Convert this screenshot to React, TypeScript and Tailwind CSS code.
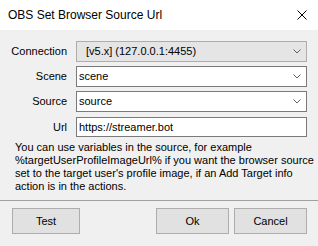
import React from 'react'

function Chevron() {
  return (
    <svg width="8" height="5" viewBox="0 0 8 5" className="shrink-0">
      <path d="M0.5 0.5 L4 4 L7.5 0.5" fill="none" stroke="#606060" strokeWidth="1" />
    </svg>
  )
}

function Row({ label, children, className = '' }: { label: string; children: React.ReactNode; className?: string }) {
  return (
    <div className={`flex items-center ${className}`}>
      <span className="w-[67px] text-right shrink-0">{label}</span>
      <div className="ml-[9px] w-[231px]">{children}</div>
    </div>
  )
}

export default function App() {
  return (
    <div className="w-[318px] h-[246px] bg-[#f0f0f0] flex flex-col text-black overflow-hidden" style={{ fontFamily: '"Liberation Sans", Arial, sans-serif' }}>
      {/* Title bar */}
      <div className="h-[30px] bg-white flex items-center justify-between pl-[8px] pr-[11px] shrink-0">
        <span className="text-[12px]">OBS Set Browser Source Url</span>
        <svg width="10" height="10" viewBox="0 0 10 10">
          <path d="M0.5 0.5 L9.5 9.5 M9.5 0.5 L0.5 9.5" stroke="#000" strokeWidth="1" />
        </svg>
      </div>

      {/* Fields */}
      <div className="flex flex-col text-[11px] pt-[11px]">
        <Row label="Connection">
          <div className="h-[21px] bg-[#e5e5e5] border border-[#adadad] flex items-center justify-between pl-[9px] pr-[5px]">
            <span>[v5.x] (127.0.0.1:4455)</span>
            <Chevron />
          </div>
        </Row>
        <Row label="Scene" className="mt-[4px]">
          <div className="h-[21px] bg-white border border-[#7a7a7a] flex items-center justify-between pl-[2px] pr-[5px]">
            <span>scene</span>
            <Chevron />
          </div>
        </Row>
        <Row label="Source" className="mt-[4px]">
          <div className="h-[21px] bg-white border border-[#7a7a7a] flex items-center justify-between pl-[2px] pr-[5px]">
            <span>source</span>
            <Chevron />
          </div>
        </Row>
        <Row label="Url" className="mt-[5px]">
          <div className="h-[20px] bg-white border border-[#7a7a7a] flex items-center pl-[2px]">
            <span>https://streamer.bot</span>
          </div>
        </Row>

        <p className="mt-[4px] pl-[15px] leading-[13px] whitespace-nowrap">
          You can use variables in the source, for example
          <br />
          %targetUserProfileImageUrl% if you want the browser source
          <br />
          set to the target user's profile image, if an Add Target info
          <br />
          action is in the actions.
        </p>
      </div>

      {/* Separator */}
      <div className="mt-[7px] h-px bg-[#a0a0a0]" />

      {/* Buttons */}
      <div className="flex text-[11px] mt-[7px] pl-[12px] pr-[11px]">
        <button className="w-[68px] h-[26px] bg-[#e1e1e1] border border-[#adadad]">Test</button>
        <button className="ml-auto w-[73px] h-[26px] bg-[#e1e1e1] border border-[#adadad]">Ok</button>
        <button className="ml-[5px] w-[73px] h-[26px] bg-[#e1e1e1] border border-[#adadad]">Cancel</button>
      </div>
    </div>
  )
}
